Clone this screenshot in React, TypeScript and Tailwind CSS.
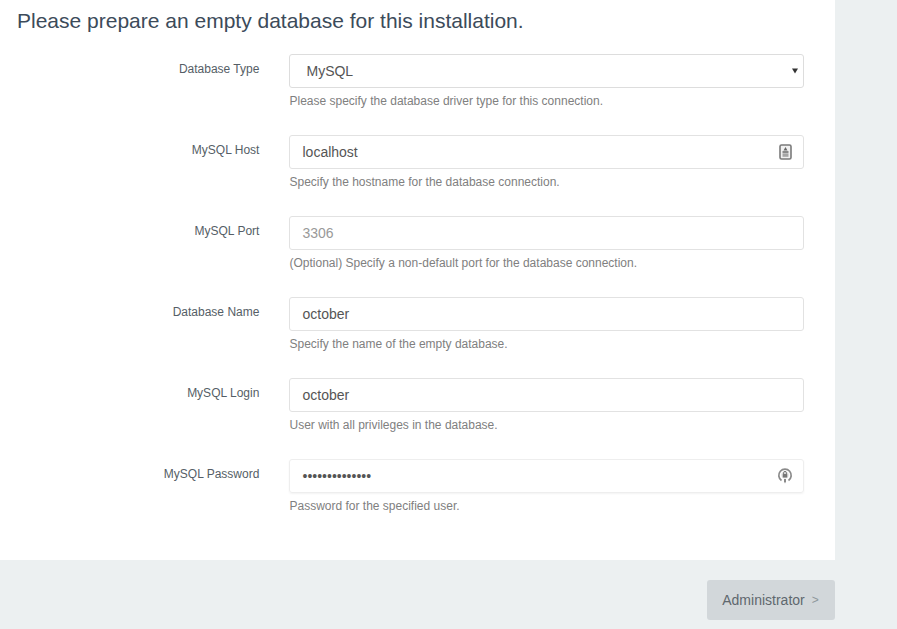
const fields = [
  { label: "MySQL Host", value: "localhost", help: "Specify the hostname for the database connection.", icon: "host" },
  { label: "MySQL Port", placeholder: "3306", help: "(Optional) Specify a non-default port for the database connection." },
  { label: "Database Name", value: "october", help: "Specify the name of the empty database." },
  { label: "MySQL Login", value: "october", help: "User with all privileges in the database." },
  { label: "MySQL Password", value: "secretpassword", help: "Password for the specified user.", icon: "key" },
];

const HostIcon = () => (
  <svg width="13" height="16" viewBox="0 0 13 16" className="absolute right-[12px] top-[9px]">
    <rect x="1" y="1" width="11" height="14" rx="1.5" fill="#f0f0f0" stroke="#7a7a7a" strokeWidth="1.6" />
    <path d="M6.5 3 L8.5 6.5 H4.5 Z" fill="#666" />
    <rect x="3.5" y="7" width="6" height="2.5" fill="#8a8a8a" />
    <rect x="3.5" y="10" width="6" height="2.8" fill="#a5a5a5" />
  </svg>
);

const KeyIcon = () => (
  <svg width="16" height="18" viewBox="0 0 16 18" className="absolute right-[11px] top-[8px]">
    <path d="M4.5 13.5 A6.2 6.2 0 1 1 11.5 13.5" fill="none" stroke="#8a8a8a" strokeWidth="1.7" />
    <circle cx="8" cy="8" r="3.6" fill="#dddddd" />
    <rect x="5.8" y="7" width="4.4" height="3.4" rx="0.5" fill="#777" />
    <path d="M6.6 7 V5.8 A1.4 1.4 0 0 1 9.4 5.8 V7" fill="none" stroke="#777" strokeWidth="1" />
    <path d="M7 12 H9 V14.5 L8 16.5 L7 14.5 Z" fill="#8a8a8a" />
  </svg>
);

const Row = ({ label, children, help }: { label: string; children: React.ReactNode; help: string }) => (
  <div className="flex h-[81px]">
    <label className="w-[259.4px] pt-[7px] text-right text-[12px] leading-[16px] text-[#555e66]">{label}</label>
    <div className="ml-[29.6px] w-[515px]">
      {children}
      <p className="mt-[6px] pl-[0.5px] text-[12px] leading-[15px] text-[#808080]">{help}</p>
    </div>
  </div>
);

const App = () => {
  return (
    <div className="flex h-[629px] flex-col overflow-hidden bg-[#ecf0f1] font-['Liberation_Sans',Arial,sans-serif]">
      <div className="h-[560px] w-[835px] bg-white">
        <h2 className="pl-[17px] pt-[8px] text-[21px] leading-[26px] text-[#3c4b5a]">
          Please prepare an empty database for this installation.
        </h2>
        <form className="mt-[20px]">
          <Row label="Database Type" help="Please specify the database driver type for this connection.">
            <div className="relative">
              <select className="h-[34px] w-full appearance-none rounded-[3px] border border-[#dddddd] bg-white pl-[16.5px] text-[14px] text-[#555555]">
                <option>MySQL</option>
              </select>
              <svg width="6" height="6" viewBox="0 0 6 6" className="pointer-events-none absolute right-[6px] top-[14px]">
                <path d="M0 0.5 H6 L3 5.5 Z" fill="#333333" />
              </svg>
            </div>
          </Row>
          {fields.map((f) => (
            <Row key={f.label} label={f.label} help={f.help}>
              <div className="relative">
                <input
                  readOnly
                  type={f.icon === "key" ? "password" : "text"}
                  value={f.value}
                  placeholder={f.placeholder}
                  className={`h-[34px] w-full rounded-[3px] border pl-[12.5px] text-[14px] text-[#555555] placeholder:text-[#999999] ${f.icon === "key" ? "border-[#eeeeee] shadow-[0_1px_2px_rgba(0,0,0,0.05)]" : "border-[#e2e2e2]"}`}
                />
                {f.icon === "host" && <HostIcon />}
                {f.icon === "key" && <KeyIcon />}
              </div>
            </Row>
          ))}
        </form>
      </div>
      <div className="flex w-[835px] justify-end pt-[20px]">
        <button className="flex h-[40px] w-[128px] items-center justify-center rounded-[3px] bg-[#d2d7da] pr-[1px] text-[14px] text-[#5f686e]">
          Administrator
          <span className="ml-[7px] text-[12px] text-[#8e979c]">&gt;</span>
        </button>
      </div>
    </div>
  );
};

export default App;
